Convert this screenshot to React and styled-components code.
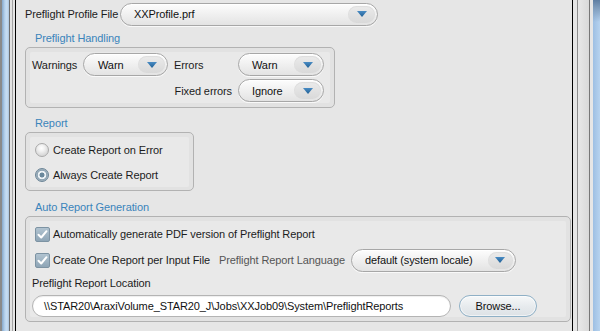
import React from 'react';
import styled, { createGlobalStyle } from 'styled-components';

const GlobalStyle = createGlobalStyle`
  html, body { margin: 0; padding: 0; background: #e6e6e6; }
  body { font-family: "Liberation Sans", Arial, sans-serif; font-size: 11px; letter-spacing: -0.1px; color: #1c1c1c; }
  #root { width: 600px; height: 331px; }
`;

const Window = styled.div`
  display: flex;
  width: 600px;
  height: 331px;
  overflow: hidden;
`;

const LeftFrame = styled.div`
  flex: none;
  width: 16px;
  background: linear-gradient(to right,
    #8a8a8a 0 2px,
    #86a8cb 2px, #b9d4ee 5px, #c9def2 7px, #a9c3dd 9px,
    #6c6c6c 9px 10px,
    #e2e2e2 10px 12px,
    #a3a3a3 12px 13px,
    #e4e4e4 13px 15px,
    #000 15px 16px);
`;

const RightFrame = styled.div`
  flex: none;
  width: 28px;
  background:
    linear-gradient(to bottom, #5e7ea2 0, #7f9dbd 8px, rgba(168,200,234,0) 22px) right top / 7px 100% no-repeat,
    linear-gradient(to right,
      #000 0 1px,
      #e6e6e6 1px 5px,
      #8e8e8e 5px 6px,
      #e8e8e8 6px, #d9d9d9 17px,
      #777 17px 18px,
      #e6e6e6 18px 21px,
      #9dbfe3 21px, #b7d3ef 28px);
`;

const Content = styled.div`
  flex: 1;
  min-width: 0;
  background: #e6e6e6;
  padding: 3px 0 0 9px;
  display: flex;
  flex-direction: column;
`;

const TopRow = styled.div`
  display: flex;
  align-items: center;
  height: 22px;
`;

const Label = styled.span`
  white-space: nowrap;
  color: ${p => (p.$muted ? '#555' : '#1c1c1c')};
  width: ${p => (p.$w ? `${p.$w}px` : 'auto')};
  text-align: ${p => (p.$right ? 'right' : 'left')};
  flex: none;
`;

const SectionTitle = styled.div`
  color: #3a84bb;
  height: 14px;
  line-height: 14px;
  padding-left: 10px;
  margin-top: ${p => p.$mt}px;
  margin-bottom: 2px;
`;

const GroupBox = styled.div`
  box-sizing: border-box;
  width: ${p => p.$w}px;
  border: 1px solid #b2b2b2;
  border-radius: 5px;
  padding: 4px 4px ${p => p.$pb ?? 4}px;
  background: #e2e2e2;
`;

const GroupInner = styled.div`
  background: #e9e9e9;
  border-radius: 2px;
`;

const HandlingGrid = styled.div`
  display: grid;
  grid-template-columns: 45px 85px 58px 86px;
  grid-auto-rows: 23px;
  column-gap: 6px;
  row-gap: 3px;
  align-items: center;
  padding: 1px 0 1px 2px;
`;

const Select = styled.div`
  box-sizing: border-box;
  display: flex;
  align-items: center;
  width: ${p => p.$w}px;
  height: ${p => p.$h || 23}px;
  border: 1px solid #a7a7a7;
  border-radius: 12px;
  padding: 0 2px 0 ${p => p.$pl || 13}px;
  background: linear-gradient(#fdfdfd 0%, #f1f1f1 45%, #e3e3e3 100%);
  box-shadow: inset 0 1px 0 #fff, 0 1px 0 rgba(255, 255, 255, 0.7);
  flex: none;
`;

const SelectText = styled.span`
  flex: 1;
  white-space: nowrap;
  color: #111;
`;

const ArrowPill = styled.span`
  flex: none;
  display: flex;
  align-items: center;
  justify-content: center;
  width: ${p => p.$w || 27}px;
  height: 17px;
  border-radius: 9px;
  background: linear-gradient(#ebebeb, #d9d9d9);
  box-shadow: inset 0 1px 1px rgba(0, 0, 0, 0.06);
`;

const Arrow = () => (
  <svg width="10" height="6" viewBox="0 0 10 6">
    <defs>
      <linearGradient id="ag" x1="0" y1="0" x2="0" y2="1">
        <stop offset="0" stopColor="#4a8cc4" />
        <stop offset="1" stopColor="#1f5f94" />
      </linearGradient>
    </defs>
    <polygon points="0,0 10,0 5,6" fill="url(#ag)" />
  </svg>
);

const Dropdown = ({ w, text, arrowW, pl, h }) => (
  <Select $w={w} $pl={pl} $h={h}>
    <SelectText>{text}</SelectText>
    <ArrowPill $w={arrowW}>
      <Arrow />
    </ArrowPill>
  </Select>
);

const OptionRow = styled.div`
  display: flex;
  align-items: center;
  height: ${p => p.$h || 25}px;
  padding-left: ${p => p.$pl ?? 5}px;
  gap: ${p => p.$gap ?? 4}px;
`;

const Radio = styled.span`
  box-sizing: border-box;
  flex: none;
  width: 14px;
  height: 14px;
  border-radius: 50%;
  border: 1px solid ${p => (p.$on ? '#6c8597' : '#a9a9a9')};
  background: ${p =>
    p.$on
      ? 'radial-gradient(circle at 50% 50%, #6a889c 0 2.2px, #eef3f6 2.8px 4px, #8aa1b1 4.6px, #a6b6c1 6px)'
      : 'radial-gradient(circle at 45% 35%, #ffffff 0, #f2f2f2 3px, #d9d9d9 7px)'};
`;

const CheckBox = styled.span`
  box-sizing: border-box;
  flex: none;
  width: 15px;
  height: 15px;
  border-radius: 2px;
  border: 1px solid #7d93a3;
  background: linear-gradient(#b1c3d0, #8ea5b6);
  display: flex;
  align-items: center;
  justify-content: center;
`;

const Check = () => (
  <svg width="13" height="13" viewBox="0 0 13 13">
    <path d="M2.5 6.8 L5.2 9.5 L10.5 3.2" fill="none" stroke="#fff" strokeWidth="2" strokeLinecap="round" strokeLinejoin="round" />
  </svg>
);

const LangLabel = styled(Label)`
  margin-left: 6px;
  margin-right: 3px;
`;

const AutoRow = styled.div`
  display: flex;
  align-items: center;
  height: ${p => p.$h}px;
  padding-left: ${p => p.$pl}px;
  margin-top: ${p => p.$mt || 0}px;
  gap: ${p => p.$gap || 0}px;
`;

const Field = styled.div`
  box-sizing: border-box;
  width: 419px;
  height: 22px;
  display: flex;
  align-items: center;
  padding-left: 11px;
  border: 1px solid #b4b4b4;
  border-radius: 11px;
  background: #fff;
  box-shadow: inset 0 1px 1px rgba(0, 0, 0, 0.07);
  white-space: nowrap;
  overflow: hidden;
  color: #111;
`;

const Button = styled.div`
  box-sizing: border-box;
  width: 78px;
  height: 22px;
  display: flex;
  align-items: center;
  justify-content: center;
  border: 1px solid #8fb0c6;
  border-radius: 11px;
  background: linear-gradient(#f6f8f9, #e6eaed 55%, #dde2e6);
  box-shadow: inset 0 0 0 1px rgba(255, 255, 255, 0.6);
  color: #111;
`;

export default function App() {
  return (
    <>
      <GlobalStyle />
      <Window>
        <LeftFrame />
        <Content>
          <TopRow>
            <Label $w={95}>Preflight Profile File</Label>
            <Dropdown w={258} text="XXProfile.prf" />
          </TopRow>

          <SectionTitle $mt={6}>Preflight Handling</SectionTitle>
          <GroupBox $w={310} $pb={4}>
            <GroupInner>
              <HandlingGrid>
                <Label>Warnings</Label>
                <Dropdown w={85} text="Warn" pl={14} />
                <Label>Errors</Label>
                <Dropdown w={86} text="Warn" pl={13} />
                <span />
                <span />
                <Label $right>Fixed errors</Label>
                <Dropdown w={86} text="Ignore" pl={13} />
              </HandlingGrid>
            </GroupInner>
          </GroupBox>

          <SectionTitle $mt={8}>Report</SectionTitle>
          <GroupBox $w={169} $pb={3}>
            <GroupInner>
              <OptionRow>
                <Radio />
                <span>Create Report on Error</span>
              </OptionRow>
              <OptionRow>
                <Radio $on />
                <span>Always Create Report</span>
              </OptionRow>
            </GroupInner>
          </GroupBox>

          <SectionTitle $mt={9}>Auto Report Generation</SectionTitle>
          <GroupBox $w={546} $pb={4}>
            <GroupInner>
              <AutoRow $h={26} $pl={5} $gap={3}>
                <CheckBox><Check /></CheckBox>
                <span>Automatically generate PDF version of Preflight Report</span>
              </AutoRow>
              <AutoRow $h={26} $pl={5} $gap={3}>
                <CheckBox><Check /></CheckBox>
                <span>Create One Report per Input File</span>
                <LangLabel $muted>Preflight Report Language</LangLabel>
                <Dropdown w={165} text="default (system locale)" arrowW={25} />
              </AutoRow>
              <AutoRow $h={20} $pl={2}>
                <span>Preflight Report Location</span>
              </AutoRow>
              <AutoRow $h={23} $pl={2} $mt={1} $gap={8}>
                <Field>\\STAR20\AraxiVolume_STAR20_J\Jobs\XXJob09\System\PreflightReports</Field>
                <Button>Browse...</Button>
              </AutoRow>
            </GroupInner>
          </GroupBox>
        </Content>
        <RightFrame />
      </Window>
    </>
  );
}
